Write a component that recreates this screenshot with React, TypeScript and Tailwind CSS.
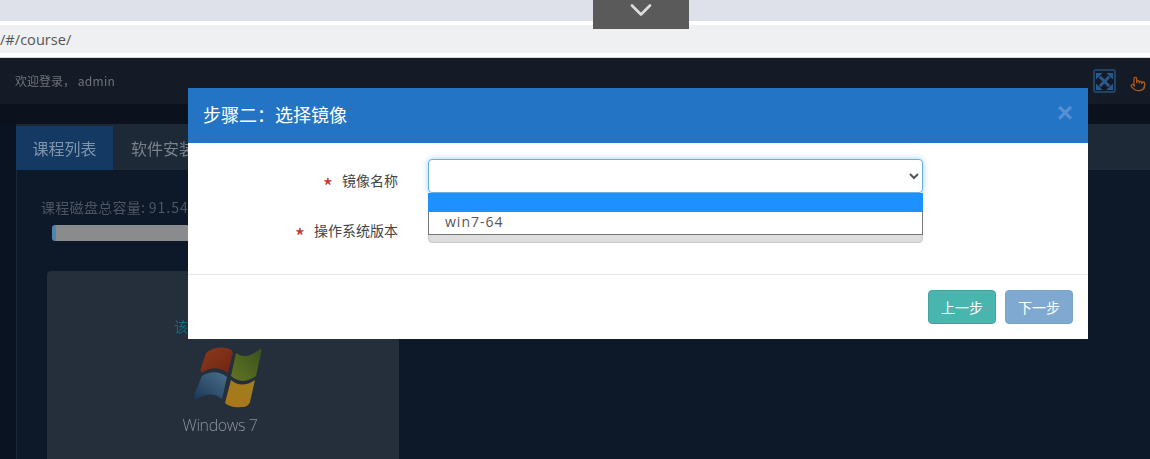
import { ChevronDown, Pointer } from "lucide-react";

const cjk = "font-['Noto_Sans_CJK_SC','Liberation_Sans',sans-serif]";

const FormRow = ({ label, children }: { label: string; children: React.ReactNode }) => {
  return (
    <div className="flex items-start">
      <div className="w-[210px] h-[34px] pt-[9px] flex justify-end items-center gap-[9px] text-[14px] text-[#444]">
        <span className="text-[#c9302c] text-[22px] leading-none pt-[8px]">*</span>
        <span>{label}</span>
      </div>
      <div className="relative ml-[30px] w-[495px]">{children}</div>
    </div>
  );
};

const WindowsLogo = () => {
  return (
    <svg viewBox="0 0 68 62" className="w-[68px] h-[62px]">
      <defs>
        <linearGradient id="red" x1="0" y1="0" x2="1" y2="1">
          <stop offset="0" stopColor="#8c3a1a" />
          <stop offset="1" stopColor="#702414" />
        </linearGradient>
        <linearGradient id="green" x1="0" y1="1" x2="1" y2="0">
          <stop offset="0" stopColor="#627422" />
          <stop offset="1" stopColor="#38521e" />
        </linearGradient>
        <linearGradient id="blue" x1="1" y1="0" x2="0" y2="1">
          <stop offset="0" stopColor="#4a6f8b" />
          <stop offset="1" stopColor="#1a3656" />
        </linearGradient>
        <linearGradient id="yellow" x1="1" y1="0" x2="0" y2="1">
          <stop offset="0" stopColor="#9e7f1e" />
          <stop offset="1" stopColor="#ab761a" />
        </linearGradient>
      </defs>
      <path d="M12 6 C20 0 30 -1 37 3 C39 4 39 6 38 9 L34 26 C26 20 17 20 9 25 C7 26 6 24 7 21 Z" fill="url(#red)" />
      <path d="M42 6 C49 11 56 10 66 2 C67 1 68 3 67 6 L62 29 C52 36 44 35 37 29 Z" fill="url(#green)" />
      <path d="M8 29 C16 24 25 24 33 30 L28 52 C21 46 12 46 3 52 C0 53 -1 51 0 48 Z" fill="url(#blue)" />
      <path d="M37 33 C44 39 52 39 61 33 L56 55 C55 58 52 60 48 60 C41 61 36 60 31 56 Z" fill="url(#yellow)" />
    </svg>
  );
};

const App = () => {
  return (
    <div className={`relative w-[1150px] h-[459px] overflow-hidden bg-white ${cjk}`}>
      <div className="h-[21px] bg-[#dee1e9]" />
      <div className="mt-[4px] h-[28px] bg-[#eff0f2] flex items-center text-[14.6px] text-[#555] leading-none font-['Open_Sans',sans-serif]">
        /#/course/
      </div>

      {/* page behind the dialog */}
      <div className="mt-[4px] h-[402px] bg-[#0a1322] border-t border-[#d5d8de] overflow-hidden">
        <div className="h-[46px] bg-[#141a26] flex items-center justify-between pl-[15px] pr-[4px] blur-[0.4px]">
          <span className="text-[12px] text-[#6f7278]">
            欢迎登录， <span className="tracking-[0.3px]">admin</span>
          </span>
          <div className="flex items-center gap-[14px]">
            <div className="w-[23px] h-[24px] border-2 border-[#1f4468] rounded-[3px] flex items-center justify-center">
              <svg viewBox="0 0 20 20" className="w-[19px] h-[19px]">
                <path d="M5 5 L15 15 M15 5 L5 15" stroke="#2a5a8c" strokeWidth="3" />
                <path d="M1 1 H8 L1 8 Z M19 1 V8 L12 1 Z M1 19 V12 L8 19 Z M19 19 H12 L19 12 Z" fill="#2a5a8c" />
              </svg>
            </div>
            <Pointer className="w-[16px] h-[18px] mt-[5px] text-[#a8591f]" strokeWidth={2} />
          </div>
        </div>
        <div className="h-[20px] bg-[#0c121d]" />
        <div className="blur-[0.5px]">
          <div className="h-[46px] bg-[#1e2937] ml-[16px] flex items-end text-[16px]">
            <div className="w-[97px] h-[44px] bg-[#143a63] text-[#7f94ab] flex items-center justify-center">课程列表</div>
            <div className="h-[44px] px-[18px] text-[#78808b] flex items-center">软件安装</div>
          </div>
          <div className="ml-[16px] pl-[24px] pt-[27px] bg-[#0d1828] border-l border-[#1e2937] h-[290px]">
            <div className="text-[14px] leading-[20px] text-[#4d5562] tracking-[0.3px]">
              课程磁盘总容量: <span className="tracking-[1px]">91.54</span>
            </div>
            <div className="ml-[11px] mt-[8px] w-[300px] h-[16px] rounded-[3px] bg-[#8a8b8d] border-l-[4px] border-[#4f86ad]" />
            <div className="ml-[6px] mt-[30px] w-[352px] h-[200px] rounded-[4px] bg-[#252e3b] flex flex-col items-center pt-[45px]">
              <div className="text-[14px] leading-[20px] text-[#0f6d85] w-[98px]">该</div>
              <div className="mt-[11px] ml-[10px]">
                <WindowsLogo />
              </div>
              <div className="mt-[4px] -ml-[6px] text-[16px] leading-[24px] font-light text-[#8b929c] tracking-[-0.4px] font-['Open_Sans',sans-serif]">
                Windows 7
              </div>
            </div>
          </div>
        </div>
      </div>

      {/* collapse handle */}
      <div className="absolute left-[593px] top-0 w-[96px] h-[29px] bg-[#5a5a5a] flex justify-center">
        <ChevronDown className="w-9 h-9 -mt-[8px] text-[#dcdcdc]" strokeWidth={1.8} />
      </div>

      {/* dialog */}
      <div className="absolute left-[188px] top-[88px] w-[900px] h-[251px] bg-white">
        <div className="h-[55px] bg-[#2474c5] flex items-center justify-between pl-[15px] pr-[15px] pb-[2px] text-white">
          <span className="text-[18px]">步骤二：选择镜像</span>
          <span className="text-[28px] font-bold leading-none pb-[4px] text-[#5490d3] font-['Liberation_Sans',sans-serif]">×</span>
        </div>
        <div className="h-[132px] border-b border-[#e5e5e5] pt-[16px] flex flex-col gap-[16px]">
          <FormRow label="镜像名称">
            <select className="w-full h-[34px] rounded-[4px] bg-white border border-[#66afe9] shadow-[0_0_6px_rgba(102,175,233,0.6)] text-[14px] text-[#555] outline-none pl-[12px]">
              <option></option>
            </select>
            <div className="absolute left-0 top-[34px] w-full z-10 h-[42px] bg-white border-x border-b border-[#767676]">
              <div className="h-[19px] bg-[#1e90ff] -mx-[1px]" />
              <div className="h-[22px] pl-[16px] text-[14px] leading-[20px] text-[#555] tracking-[1px] font-['Open_Sans',sans-serif]">win7-64</div>
            </div>
          </FormRow>
          <FormRow label="操作系统版本">
            <div className="h-[34px] rounded-[4px] bg-[#dddddd] border border-[#ccc]" />
          </FormRow>
        </div>
        <div className="pt-[15px] pr-[15px] flex justify-end gap-[9px] text-[14px] text-white">
          <button className="w-[68px] h-[34px] rounded-[4px] bg-[#48b6ae] border border-[#43a49e]">上一步</button>
          <button className="w-[68px] h-[34px] rounded-[4px] bg-[#7fa9d0] border border-[#79a3c9]">下一步</button>
        </div>
      </div>
    </div>
  );
};

export default App;
